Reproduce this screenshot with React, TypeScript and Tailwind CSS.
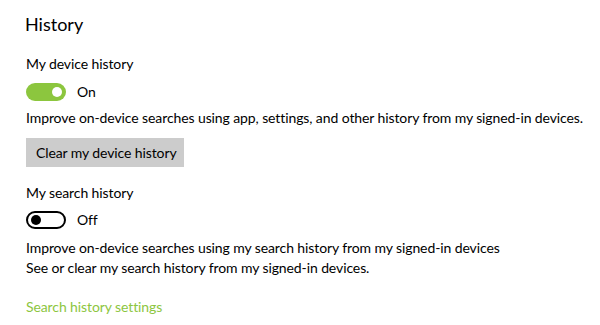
import React from "react";

const font = { fontFamily: 'Lato, "Noto Sans", sans-serif' };

function Toggle({ on }: { on: boolean }) {
  return on ? (
    <div className="w-[40px] h-[18px] rounded-full bg-[#8cc63e] flex items-center justify-end pr-[4px]">
      <div className="w-[10px] h-[10px] rounded-full bg-white" />
    </div>
  ) : (
    <div className="w-[40px] h-[18px] rounded-full border-2 border-black flex items-center pl-[3px] box-border">
      <div className="w-[10px] h-[10px] rounded-full bg-black" />
    </div>
  );
}

export default function App() {
  return (
    <div
      className="w-[600px] h-[325px] bg-white text-black overflow-hidden pl-[26px] whitespace-nowrap tracking-[-0.1px]"
      style={font}
    >
      <div className="pt-[11px] text-[18px] leading-[26px] -ml-[1px] tracking-normal">History</div>
      <div className="mt-[17px] text-[14px] leading-[20px]">My device history</div>
      <div className="mt-[8px] flex items-center gap-[11px]">
        <Toggle on />
        <span className="text-[14px] leading-[20px]">On</span>
      </div>
      <div className="mt-[6px] text-[14px] leading-[20px]">
        Improve on-device searches using app, settings, and other history from my signed-in devices.
      </div>
      <div className="mt-[10px] w-[158px] h-[29px] bg-[#cccccc] flex items-center pl-[10px] text-[14px]">
        Clear my device history
      </div>
      <div className="mt-[16px] text-[14px] leading-[20px]">My search history</div>
      <div className="mt-[7px] flex items-center gap-[11px]">
        <Toggle on={false} />
        <span className="text-[14px] leading-[20px]">Off</span>
      </div>
      <div className="mt-[8px] text-[14px] leading-[20px]">
        Improve on-device searches using my search history from my signed-in devices
      </div>
      <div className="text-[14px] leading-[20px]">See or clear my search history from my signed-in devices.</div>
      <div className="mt-[19px] text-[14px] leading-[20px] text-[#8dc63f]">Search history settings</div>
    </div>
  );
}
